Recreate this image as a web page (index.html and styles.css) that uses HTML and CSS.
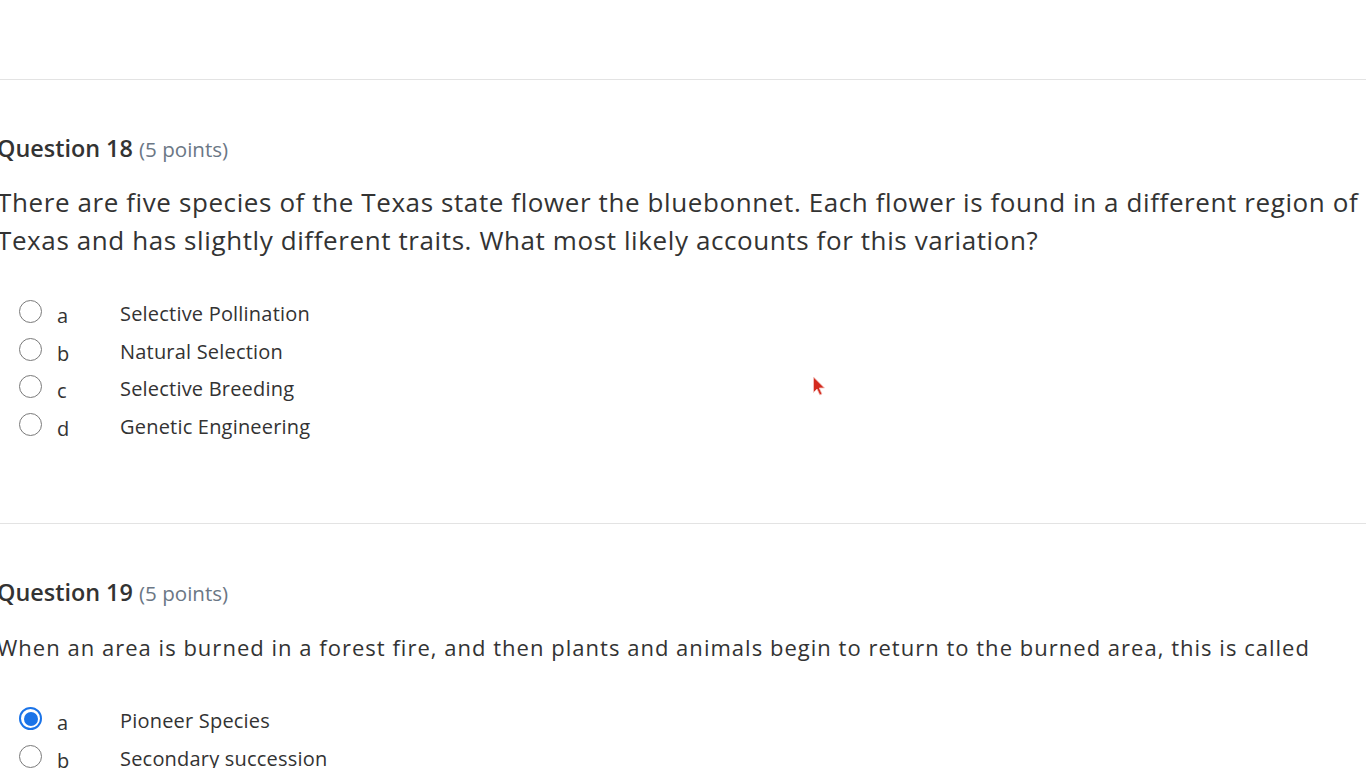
FILE: index.html
```html
<!DOCTYPE html>
<html>
<head>
<meta charset="utf-8">
<link rel="stylesheet" href="styles.css">
</head>
<body>
<div class="page">
  <div class="top-gap"></div>
  <section class="question">
    <h2 class="q-title">Question 18 <span class="points">(5 points)</span></h2>
    <p class="q-text large">There are five species of the Texas state flower the bluebonnet. Each flower is found in a different region of Texas and has slightly different traits. What most likely accounts for this variation?</p>
    <ul class="options">
      <li class="option"><span class="radio"></span><span class="letter">a</span><span class="answer">Selective Pollination</span></li>
      <li class="option"><span class="radio"></span><span class="letter">b</span><span class="answer">Natural Selection</span></li>
      <li class="option"><span class="radio"></span><span class="letter">c</span><span class="answer">Selective Breeding</span></li>
      <li class="option"><span class="radio"></span><span class="letter">d</span><span class="answer">Genetic Engineering</span></li>
    </ul>
  </section>
  <section class="question">
    <h2 class="q-title">Question 19 <span class="points">(5 points)</span></h2>
    <p class="q-text small">When an area is burned in a forest fire, and then plants and animals begin to return to the burned area, this is called</p>
    <ul class="options">
      <li class="option"><span class="radio checked"></span><span class="letter">a</span><span class="answer">Pioneer Species</span></li>
      <li class="option"><span class="radio"></span><span class="letter">b</span><span class="answer">Secondary succession</span></li>
    </ul>
  </section>
</div>
<svg class="cursor" width="16" height="22" viewBox="0 0 16 22"><path d="M1.5 1 L1.5 16.5 L5 13 L7.8 19 L10 18 L7.3 12 L12.5 12 Z" fill="#d42a1e" stroke="#f3c9c4" stroke-width="0.8"/></svg>
</body>
</html>
```
FILE: styles.css
```css
html, body {
  margin: 0;
  padding: 0;
  background: #ffffff;
  overflow: hidden;
}
body {
  font-family: "Open Sans", "Noto Sans", sans-serif;
  color: #333333;
  width: 1366px;
  height: 768px;
  position: relative;
}
.page {
  margin-left: -3px;
  width: 1369px;
}
.top-gap {
  height: 79px;
}
.question {
  border-top: 1px solid #e3e3e3;
  padding-top: 50px;
  height: 393px;
}
.q-title {
  margin: 0;
  font-size: 23.4px;
  font-weight: 600;
  line-height: 36px;
  color: #333333;
}
.points {
  font-size: 20.6px;
  font-weight: 400;
  color: #6b7785;
}
.q-text {
  margin: 0;
  color: #333333;
}
.q-text.large {
  font-size: 26px;
  line-height: 38px;
  letter-spacing: 0.6px;
  margin-top: 16px;
}
.q-text.small {
  font-size: 22px;
  line-height: 34px;
  letter-spacing: 1.02px;
  margin-top: 19px;
}
.options {
  list-style: none;
  margin: 36px 0 0 0;
  padding: 0 0 0 22px;
}
.small + .options {
  margin-top: 38px;
}
.option {
  display: flex;
  align-items: center;
  height: 37.6px;
  font-size: 20px;
  letter-spacing: 0.2px;
}
.radio {
  width: 23px;
  height: 23px;
  border: 1.5px solid #7a7a7a;
  border-radius: 50%;
  box-sizing: border-box;
  flex: none;
  margin-top: -4px;
  position: relative;
}
.radio.checked {
  border: 2px solid #1a73e8;
}
.radio.checked::after {
  content: "";
  position: absolute;
  left: 2.5px;
  top: 2.5px;
  width: 14px;
  height: 14px;
  border-radius: 50%;
  background: #1a73e8;
}
.letter {
  width: 78px;
  padding-left: 15px;
  box-sizing: border-box;
  flex: none;
  margin-top: 4px;
}
.answer {
  flex: none;
}
.cursor {
  position: absolute;
  left: 812px;
  top: 376px;
}
```
